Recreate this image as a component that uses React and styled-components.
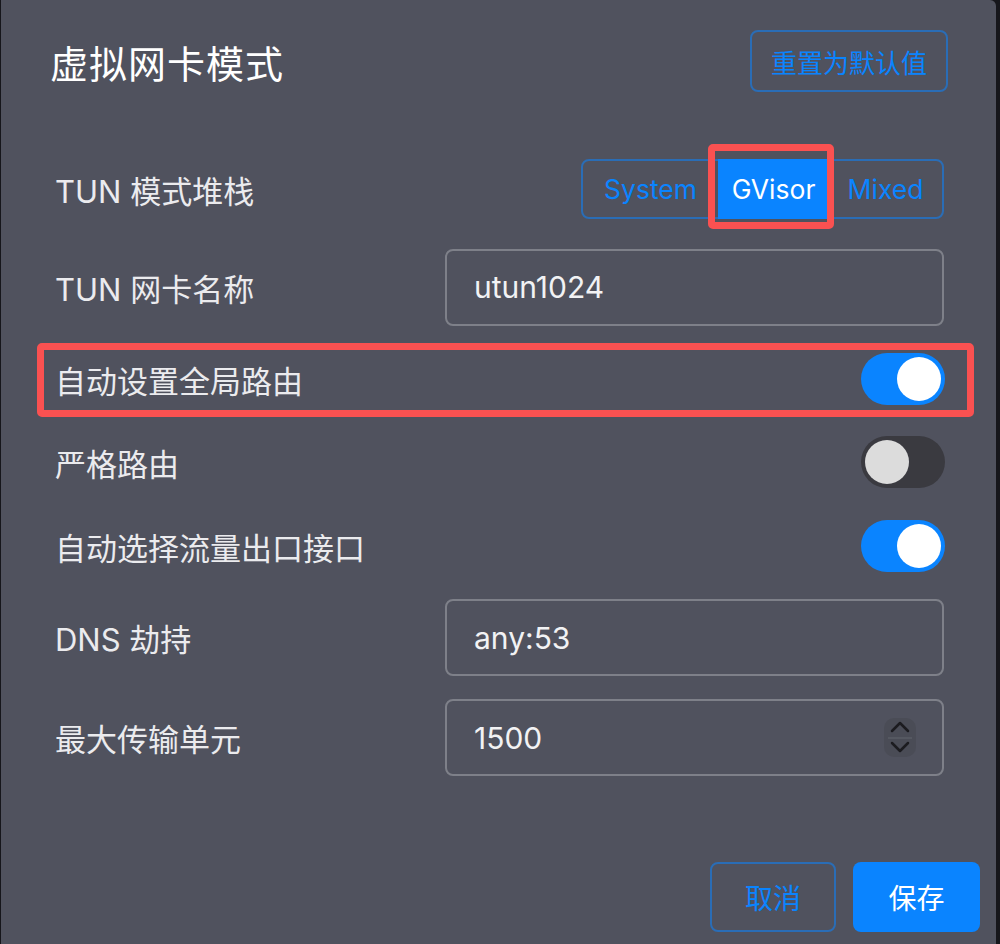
import React from 'react';
import styled, { createGlobalStyle } from 'styled-components';

const GlobalStyle = createGlobalStyle`
html, body {
  margin: 0;
  padding: 0;
  background: #16161b;
}
body {
  font-family: Inter, "Noto Sans CJK SC", sans-serif;
}
`;

const Dialog = styled.div`
margin-left: 1px;
width: 995px;
height: 944px;
box-sizing: border-box;
background: #50525e;
border-top-right-radius: 6px;
padding: 30px 16px 12px 49px;
display: flex;
flex-direction: column;
`;
const Header = styled.header`
height: 62px;
display: flex;
align-items: center;
justify-content: space-between;
padding-right: 32px;
`;
const Title = styled.h1`
margin: 0;
font-size: 38px;
font-weight: 400;
letter-spacing: 1px;
color: #ffffff;
`;
const OutlineButton = styled.button`
height: ${p => p.$h || 62}px;
padding: 0 ${p => p.$px || 19}px;
box-sizing: border-box;
border: 2px solid #2a6db6;
border-radius: 8px;
background: transparent;
color: #0a84ff;
font-family: inherit;
font-size: ${p => p.$fs || 26}px;
`;
const PrimaryButton = styled.button`
height: 70px;
width: 127px;
border: none;
border-radius: 8px;
background: #0a84ff;
color: #ffffff;
font-family: inherit;
font-size: 28px;
`;
const Form = styled.div`
display: flex;
flex-direction: column;
padding: 0 36px 0 5px;
`;
const Row = styled.div`
position: relative;
height: ${p => p.$h}px;
margin-top: ${p => p.$mt}px;
display: flex;
align-items: center;
justify-content: space-between;
`;
const Label = styled.span`
font-size: 31px;
color: #ebebee;
`;
const Highlight = styled.div`
position: absolute;
top: ${p => p.$t}px;
left: ${p => p.$l}px;
right: ${p => p.$r}px;
bottom: ${p => p.$b}px;
border: 7px solid #fa5151;
border-radius: 5px;
pointer-events: none;
`;
const Segments = styled.div`
display: flex;
height: 60px;
box-sizing: border-box;
border: 2px solid #2a6db6;
border-radius: 8px;
`;
const Segment = styled.div`
position: relative;
display: flex;
align-items: center;
justify-content: center;
width: ${p => p.$w}px;
margin: ${p => (p.$active ? '-2px 0' : '0')};
background: ${p => (p.$active ? '#0a84ff' : 'transparent')};
color: ${p => (p.$active ? '#ffffff' : '#0a84ff')};
font-size: 26.5px;
`;
const Field = styled.div`
width: 499px;
height: 77px;
box-sizing: border-box;
border: 2px solid #7e8089;
border-radius: 8px;
display: flex;
align-items: center;
padding: 0 26px 0 27px;
`;
const FieldValue = styled.span`
flex: 1;
font-size: 30px;
color: #f2f2f4;
`;
const Toggle = styled.div`
width: 84px;
height: 52px;
border-radius: 26px;
box-sizing: border-box;
padding: 4px;
background: ${p => (p.$on ? '#0a84ff' : '#3a3a40')};
display: flex;
justify-content: ${p => (p.$on ? 'flex-end' : 'flex-start')};
margin-right: -1px;
`;
const Knob = styled.div`
width: 44px;
height: 44px;
border-radius: 50%;
background: ${p => (p.$on ? '#ffffff' : '#dcdcdc')};
`;
const Footer = styled.footer`
margin-top: auto;
display: flex;
justify-content: flex-end;
gap: 17px;
`;

function Spinner() {
  return (
    <svg width="32" height="39" viewBox="0 0 32 39">
      <rect x="0" y="0" width="32" height="39" rx="10" fill="#4a4c56" />
      <line x1="4" y1="20" x2="28" y2="20" stroke="#5a5c66" strokeWidth="1.5" />
      <polyline points="8,13 16,5 24,13" fill="none" stroke="#1c1c20" strokeWidth="2.5" strokeLinecap="round" strokeLinejoin="round" />
      <polyline points="8,25 16,33 24,25" fill="none" stroke="#1c1c20" strokeWidth="2.5" strokeLinecap="round" strokeLinejoin="round" />
    </svg>
  );
}

const stacks = [
  { name: 'System', w: 135 },
  { name: 'GVisor', w: 111 },
  { name: 'Mixed', w: 113 },
];

export default function App() {
  return (
    <>
      <GlobalStyle />
      <Dialog>
        <Header>
          <Title>虚拟网卡模式</Title>
          <OutlineButton>重置为默认值</OutlineButton>
        </Header>
        <Form>
          <Row $h={60} $mt={67}>
            <Label>TUN 模式堆栈</Label>
            <Segments>
              {stacks.map(s => (
                <Segment key={s.name} $w={s.w} $active={s.name === 'GVisor'}>
                  {s.name}
                  {s.name === 'GVisor' && <Highlight $t={-15} $l={-10} $r={-5} $b={-10} />}
                </Segment>
              ))}
            </Segments>
          </Row>
          <Row $h={78} $mt={29}>
            <Label>TUN 网卡名称</Label>
            <Field><FieldValue>utun1024</FieldValue></Field>
          </Row>
          <Row $h={52} $mt={27}>
            <Label>自动设置全局路由</Label>
            <Toggle $on><Knob $on /></Toggle>
            <Highlight $t={-10} $l={-18} $r={-30} $b={-12} />
          </Row>
          <Row $h={52} $mt={31}>
            <Label>严格路由</Label>
            <Toggle><Knob /></Toggle>
          </Row>
          <Row $h={52} $mt={32}>
            <Label>自动选择流量出口接口</Label>
            <Toggle $on><Knob $on /></Toggle>
          </Row>
          <Row $h={77} $mt={27}>
            <Label>DNS 劫持</Label>
            <Field><FieldValue>any:53</FieldValue></Field>
          </Row>
          <Row $h={77} $mt={23}>
            <Label>最大传输单元</Label>
            <Field><FieldValue>1500</FieldValue><Spinner /></Field>
          </Row>
        </Form>
        <Footer>
          <OutlineButton $h={70} $px={0} $fs={28} style={{ width: 126 }}>取消</OutlineButton>
          <PrimaryButton>保存</PrimaryButton>
        </Footer>
      </Dialog>
    </>
  );
}
